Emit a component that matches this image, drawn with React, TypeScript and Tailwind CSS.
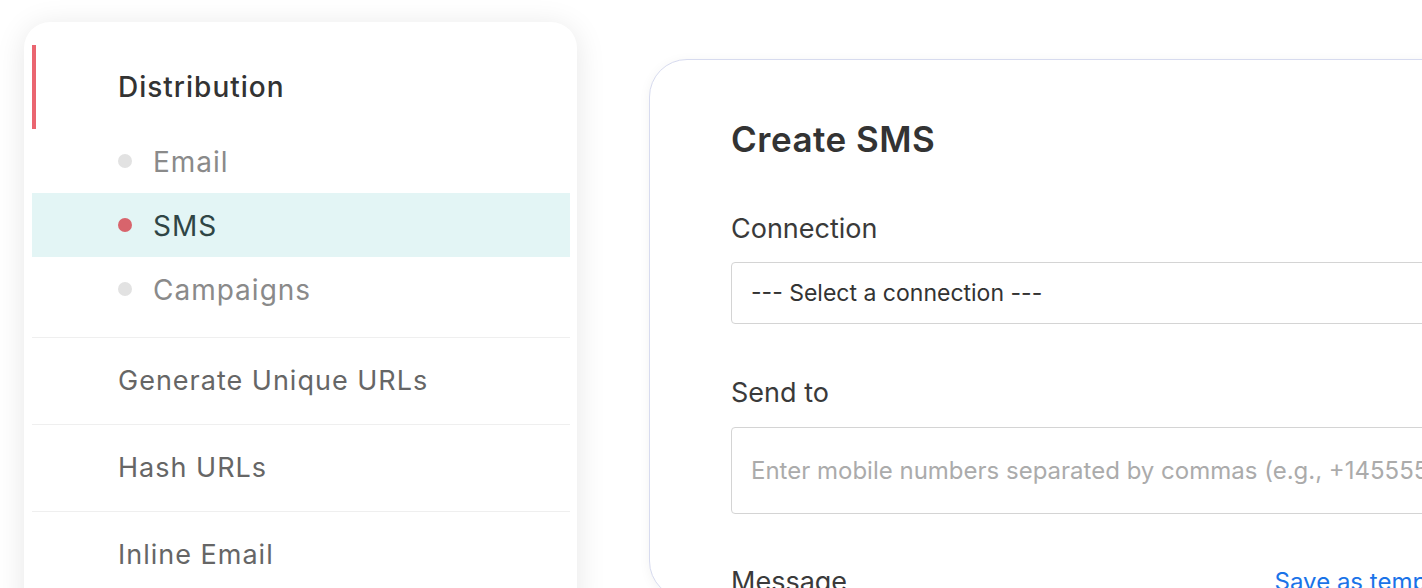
import React from 'react';

const font = { fontFamily: 'Inter, "Noto Sans", sans-serif' };

function SubItem({ label, active }: { label: string; active?: boolean }) {
    return (
        <div className={`flex h-[64px] items-center pl-[86px] ${active ? 'bg-[#e3f5f5]' : ''}`}>
            <span className={`h-[14px] w-[14px] flex-none rounded-full ${active ? 'bg-[#d8646c]' : 'bg-[#e2e2e2]'}`}></span>
            <span className={`ml-[21px] pt-[2px] text-[28px] tracking-[1px] ${active ? 'text-[#2f4545]' : 'text-[#8a8a8a]'}`}>{label}</span>
        </div>
    );
}

function MainItem({ label }: { label: string }) {
    return (
        <div className="flex h-[87px] items-center border-t border-[#efefef] pl-[86px] text-[27px] tracking-[1px] text-[#666666]">
            {label}
        </div>
    );
}

export default function App() {
    return (
        <div className="flex h-[588px] w-[1422px] items-start overflow-hidden bg-white" style={font}>
            {/* left nav */}
            <div className="ml-[24px] mt-[22px] w-[553px] flex-none rounded-[26px] bg-white pb-6 pl-[8px] pr-[7px] pt-[23px] shadow-[0_4px_30px_rgba(0,0,0,0.1)]">
                <div className="flex h-[84px] items-center border-l-4 border-[#ea6570] pl-[82px] text-[28px] font-medium tracking-[1px] text-[#333333]">
                    Distribution
                </div>
                <SubItem label="Email" />
                <SubItem label="SMS" active />
                <SubItem label="Campaigns" />
                <div className="h-[16px]"></div>
                <MainItem label="Generate Unique URLs" />
                <MainItem label="Hash URLs" />
                <MainItem label="Inline Email" />
            </div>

            {/* create sms card */}
            <div className="ml-[72px] mt-[59px] w-[900px] flex-none rounded-[38px] border border-[#d7dbef] bg-white pl-[81px] pt-[57px] shadow-[0_2px_12px_rgba(0,0,0,0.05)]">
                <h1 className="h-[44px] text-[35px] font-semibold leading-[44px] tracking-[0.5px] text-[#333333]">Create SMS</h1>
                <div className="mt-[52px] text-[27px] leading-[32px] text-[#3a3a3a]">Connection</div>
                <div className="mt-[17px] flex h-[62px] items-center rounded-[4px] border border-[#d4d4d4] pl-[19px] text-[23px] text-[#333333]">
                    --- Select a connection ---
                </div>
                <div className="mt-[53px] text-[27px] leading-[32px] text-[#3a3a3a]">Send to</div>
                <div className="mt-[18px] flex h-[87px] items-center overflow-hidden whitespace-nowrap rounded-[4px] border border-[#d4d4d4] pl-[19px] text-[24px] text-[#ababab]">
                    Enter mobile numbers separated by commas (e.g., +14555550123, +14555550124)
                </div>
                <div className="mt-[52px] flex w-[737px] items-center justify-between">
                    <span className="text-[27px] leading-[32px] text-[#3a3a3a]">Message</span>
                    <span className="text-[24px] leading-[32px] text-[#1a73e8]">Save as template</span>
                </div>
            </div>
        </div>
    );
}
